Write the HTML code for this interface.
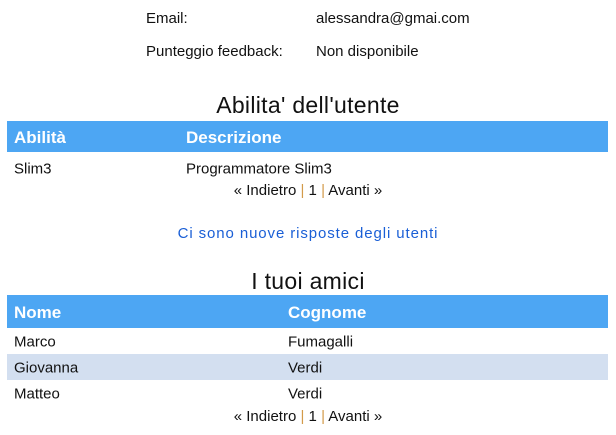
<!DOCTYPE html>
<html><head><style>
body{margin:0;width:616px;height:435px;background:#fff;font-family:"Liberation Sans",sans-serif;font-size:15px;color:#111;position:relative;overflow:hidden}
.a{position:absolute;white-space:nowrap}
.hd{position:absolute;left:7px;width:601px;background:#4da6f3;color:#fff;font-weight:bold;font-size:17px}
.row{position:absolute;left:7px;width:601px;height:26px}
.row span,.hd span{position:absolute;top:50%;transform:translateY(-45%)}
.pg{position:absolute;left:0;width:616px;text-align:center}
.pg i{font-style:normal;color:#d39a4a}
h2{position:absolute;margin:0;width:616px;text-align:center;font-weight:normal;font-size:23px;color:#111;letter-spacing:0.3px}
</style></head><body>
<div class="a" style="left:146px;top:10px">Email:</div>
<div class="a" style="left:316px;top:10px">alessandra@gmai.com</div>
<div class="a" style="left:146px;top:43px">Punteggio feedback:</div>
<div class="a" style="left:316px;top:43px">Non disponibile</div>
<h2 style="top:92px">Abilita' dell'utente</h2>
<div class="hd" style="top:121px;height:31px"><span style="left:7px">Abilità</span><span style="left:179px">Descrizione</span></div>
<div class="row" style="top:155px"><span style="left:7px">Slim3</span><span style="left:179px">Programmatore Slim3</span></div>
<div class="pg" style="top:182px">« Indietro <i>|</i> 1 <i>|</i> Avanti »</div>
<div class="pg" style="top:225px;color:#1a5fd6;letter-spacing:0.9px">Ci sono nuove risposte degli utenti</div>
<h2 style="top:268px">I tuoi amici</h2>
<div class="hd" style="top:295px;height:33px"><span style="left:7px">Nome</span><span style="left:281px">Cognome</span></div>
<div class="row" style="top:328px"><span style="left:7px">Marco</span><span style="left:281px">Fumagalli</span></div>
<div class="row" style="top:354px;background:#d3dff0"><span style="left:7px">Giovanna</span><span style="left:281px">Verdi</span></div>
<div class="row" style="top:380px"><span style="left:7px">Matteo</span><span style="left:281px">Verdi</span></div>
<div class="pg" style="top:408px">« Indietro <i>|</i> 1 <i>|</i> Avanti »</div>
</body></html>
